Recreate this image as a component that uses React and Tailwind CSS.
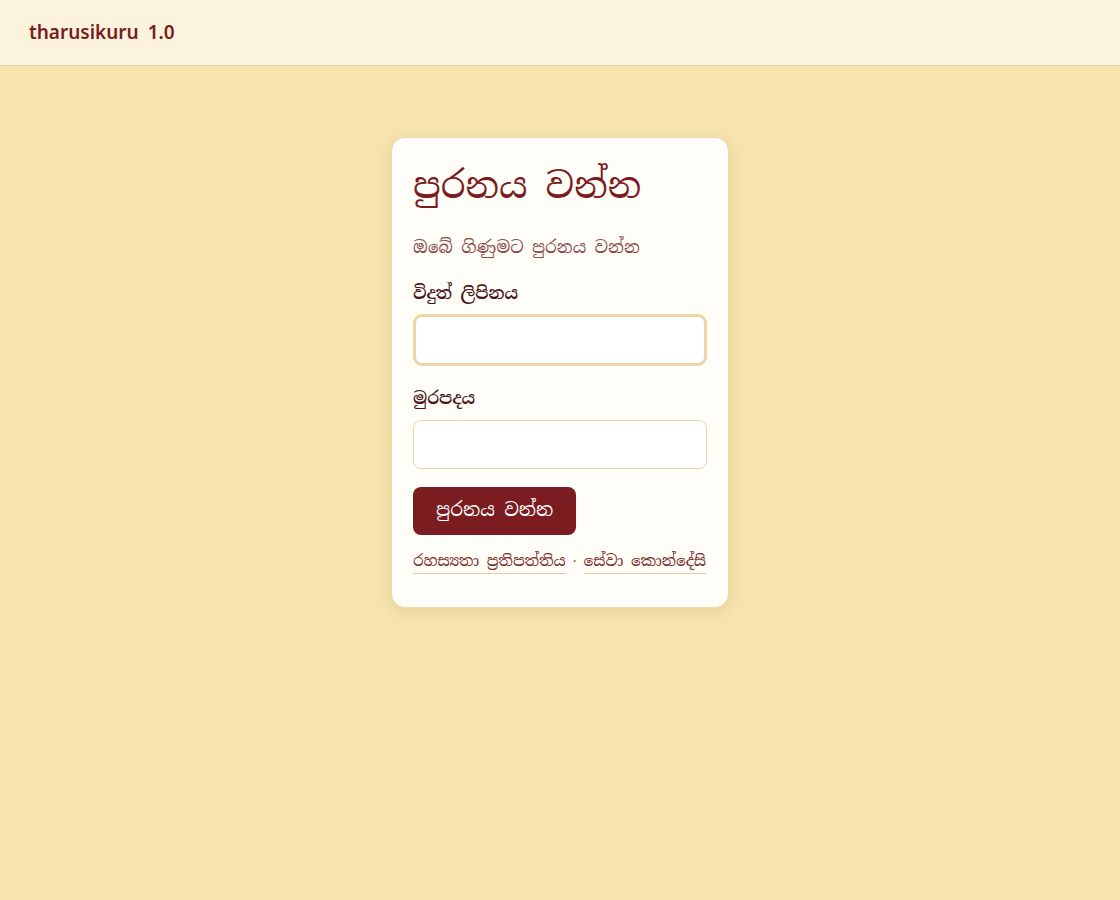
import React from 'react';

export default function App() {
  return (
    <div className="min-h-screen bg-[#f6e3ae] font-['Noto_Serif_Sinhala','Noto_Sans',serif]">
      <header className="h-[66px] bg-[#fbf3dc] border-b border-[#e6d39e] flex items-center px-[29px]">
        <div className="flex gap-[9px] font-['Noto_Sans',sans-serif] text-[19px] font-semibold text-[#7a1c20]">
          <span>tharusikuru</span>
          <span>1.0</span>
        </div>
      </header>

      <main className="flex justify-center pt-[71px]">
        <div className="w-[338px] bg-[#fffdf7] border border-[#ecdcae] rounded-[14px] shadow-[0_4px_14px_rgba(120,80,20,0.12)] px-[21px] pt-[18px] pb-[33px]">
          <h1 className="text-[36px] leading-[60px] text-[#7a1c20]">පුරනය වන්න</h1>
          <p className="mt-[16px] text-[17px] leading-[30px] text-[#8a4a4a]">ඔබේ ගිණුමට පුරනය වන්න</p>

          <form className="mt-[17px] flex flex-col">
            <label className="text-[17px] leading-[28px] font-semibold text-[#4a1518]">විදුත් ලිපිනය</label>
            <input
              type="email"
              className="mt-[7px] h-[52px] w-full rounded-[9px] bg-white border-[3px] border-[#f0d3a6] outline-none"
            />
            <label className="mt-[18px] text-[17px] leading-[28px] font-semibold text-[#4a1518]">මුරපදය</label>
            <input
              type="password"
              className="mt-[8px] h-[49px] w-full rounded-[8px] bg-white border border-[#e5d6a8] outline-none"
            />
            <div className="mt-[18px]">
              <button
                type="button"
                className="h-[48px] px-[23px] rounded-[8px] bg-[#7a1c20] text-white text-[18.5px]"
              >
                පුරනය වන්න
              </button>
            </div>
          </form>

          <div className="mt-[14px] flex items-center gap-[7px] whitespace-nowrap text-[15.3px] text-[#7a2a2a]">
            <a href="#" className="border-b border-[#e8c9a0] leading-[24px]">රහස්‍යතා ප්‍රතිපත්තිය</a>
            <span className="text-[#9a6a5a]">·</span>
            <a href="#" className="border-b border-[#e8c9a0] leading-[24px]">සේවා කොන්දේසි</a>
          </div>
        </div>
      </main>
    </div>
  );
}
